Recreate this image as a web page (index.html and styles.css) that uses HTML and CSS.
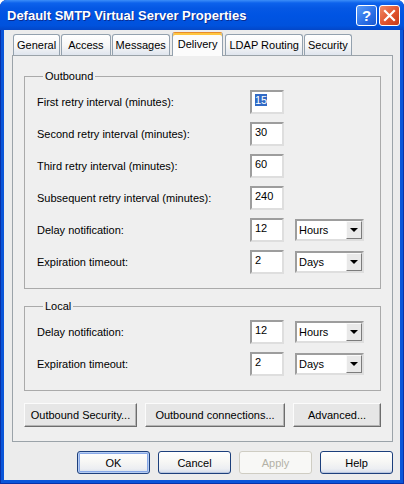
FILE: index.html
```html
<!DOCTYPE html>
<html lang="en">
<head>
  <meta charset="UTF-8" />
  <title>Default SMTP Virtual Server Properties</title>
  <link rel="stylesheet" href="styles.css">
</head>
<body>

  <div class="window">
    <div class="titlebar">
      <span class="title">Default SMTP Virtual Server Properties</span>
      <span class="cap-btn help">?</span>
      <span class="cap-btn close">
        <svg width="13" height="13" viewBox="0 0 13 13"><path d="M2 2 L11 11 M11 2 L2 11" stroke="#fff" stroke-width="2.2" stroke-linecap="square"/></svg>
      </span>
    </div>

    <div class="client">
      <div class="tabs">
        <span class="tab">General</span>
        <span class="tab tab-wide">Access</span>
        <span class="tab">Messages</span>
        <span class="tab active">Delivery</span>
        <span class="tab">LDAP Routing</span>
        <span class="tab">Security</span>
      </div>

      <div class="page">
        <!-- Outbound -->
        <fieldset class="group">
          <legend>Outbound</legend>
          <div class="rows">
            <div class="row">
              <label>First retry interval (minutes):</label>
              <div class="field"><span class="selected">15</span></div>
            </div>
            <div class="row">
              <label>Second retry interval (minutes):</label>
              <div class="field">30</div>
            </div>
            <div class="row">
              <label>Third retry interval (minutes):</label>
              <div class="field">60</div>
            </div>
            <div class="row">
              <label>Subsequent retry interval (minutes):</label>
              <div class="field">240</div>
            </div>
            <div class="row">
              <label>Delay notification:</label>
              <div class="field">12</div>
              <div class="combo"><span>Hours</span><span class="arrow"></span></div>
            </div>
            <div class="row">
              <label>Expiration timeout:</label>
              <div class="field">2</div>
              <div class="combo"><span>Days</span><span class="arrow"></span></div>
            </div>
          </div>
        </fieldset>

        <!-- Local -->
        <fieldset class="group local">
          <legend>Local</legend>
          <div class="rows">
            <div class="row">
              <label>Delay notification:</label>
              <div class="field">12</div>
              <div class="combo"><span>Hours</span><span class="arrow"></span></div>
            </div>
            <div class="row">
              <label>Expiration timeout:</label>
              <div class="field">2</div>
              <div class="combo"><span>Days</span><span class="arrow"></span></div>
            </div>
          </div>
        </fieldset>

        <div class="actions">
          <button class="btn btn-security">Outbound Security...</button>
          <button class="btn btn-conn">Outbound connections...</button>
          <button class="btn btn-adv">Advanced...</button>
        </div>
      </div>

      <div class="footer">
        <button class="xp-btn default">OK</button>
        <button class="xp-btn">Cancel</button>
        <button class="xp-btn" disabled>Apply</button>
        <button class="xp-btn">Help</button>
      </div>
    </div>
  </div>

</body>
</html>
```

FILE: styles.css
```css
* { box-sizing: border-box; }
body {
  margin: 0;
  font: 11px "Liberation Sans", Arial, sans-serif;
  color: #000;
  background: #fff;
}

.window {
  width: 404px;
  height: 484px;
  display: flex;
  flex-direction: column;
  background: #0a55d9;
  border-radius: 7px 7px 0 0;
  padding-bottom: 4px;
  box-shadow: inset 1px 0 0 #0831a8, inset -1px 0 0 #0831a8, inset 0 -1px 0 #0831a8;
}

/* Title bar */
.titlebar {
  height: 30px;
  display: flex;
  align-items: center;
  gap: 2px;
  padding: 0 4px 0 7px;
  border-radius: 7px 7px 0 0;
  background: linear-gradient(#3c8ef8 0, #0d62ec 3px, #0558e4 8px, #0054e3 50%, #0052dd 85%, #0347c8 100%);
}

.title {
  flex: 1;
  color: #fff;
  font: bold 13px "Liberation Sans", Arial, sans-serif;
  text-shadow: 1px 1px 0 #0b2c8f;
}

.cap-btn {
  width: 21px;
  height: 21px;
  border: 1px solid #fff;
  border-radius: 3px;
  display: flex;
  align-items: center;
  justify-content: center;
  color: #fff;
}

.help {
  background: linear-gradient(135deg, #5a9cf8, #2a6ee6 60%, #1a58d0);
  font: bold 15px "Liberation Sans", Arial, sans-serif;
}

.close {
  background: linear-gradient(135deg, #f08a66, #e0532e 55%, #c63a17);
}

/* Client area */
.client {
  flex: 1;
  margin: 0 4px;
  background: #ececec;
  padding: 2px 7px 0 8px;
}

.tabs {
  height: 23px;
  display: flex;
  align-items: flex-end;
  gap: 1px;
  padding-left: 1px;
  position: relative;
  z-index: 1;
}

.tab {
  height: 21px;
  padding: 0 3px;
  display: flex;
  align-items: center;
  border: 1px solid #93a1ae;
  border-bottom: none;
  border-radius: 3px 3px 0 0;
  background: linear-gradient(#ffffff, #f6f6f6 55%, #dfe5ee);
}

.tab-wide { padding: 0 6px; }

.tab.active {
  height: 24px;
  margin: 0 1px -1px;
  padding: 0 5px 2px;
  background: #fcfcfc;
  border-color: #93a1ae;
  border-top-color: #e68b2c;
  box-shadow: inset 0 2px 0 #ffc53e;
}

.page {
  background: #efefef;
  border: 1px solid #9ba3a9;
  padding: 14px 11px 14px;
}

/* Group boxes */
.group {
  margin: 0;
  min-width: 0;
  padding: 7px 16px 14px 12px;
  border: 1px solid #aaaaaa;
}

.group legend {
  margin-left: 6px;
  padding: 0 2px;
  line-height: 13px;
}

.group.local { margin-top: 11px; }

.rows {
  display: flex;
  flex-direction: column;
  gap: 8px;
}

.row {
  height: 24px;
  display: grid;
  grid-template-columns: 1fr 34px 69px;
  column-gap: 11px;
  align-items: center;
}

.field {
  height: 24px;
  padding: 1px 0 0 3px;
  line-height: 14px;
  background: #fff;
  border: 2px solid;
  border-color: #9d9d9d #dedede #dedede #9d9d9d;
}

.selected {
  background: #316ac5;
  color: #fff;
}

.combo {
  height: 22px;
  display: flex;
  align-items: center;
  padding-left: 2px;
  background: #fff;
  border: 2px solid;
  border-color: #9d9d9d #dedede #dedede #9d9d9d;
}

.combo span:first-child { flex: 1; }

.arrow {
  width: 16px;
  height: 18px;
  display: flex;
  align-items: center;
  justify-content: center;
  background: #e9e9e9;
  border: 1px solid;
  border-color: #fafafa #7c7c7c #7c7c7c #fafafa;
}

.arrow::after {
  content: "";
  border-left: 4px solid transparent;
  border-right: 4px solid transparent;
  border-top: 4px solid #000;
}

/* Buttons inside the page */
.actions {
  display: flex;
  gap: 8px;
  margin-top: 12px;
}

.btn {
  height: 24px;
  padding: 0;
  font: 11px "Liberation Sans", Arial, sans-serif;
  color: #000;
  background: #e6e6e6;
  border: 1px solid;
  border-color: #fbfbfb #6d6d6d #6d6d6d #fbfbfb;
  box-shadow: inset -1px -1px 0 #b4b4b4;
}

.btn-security { width: 113px; }
.btn-conn { width: 140px; }
.btn-adv { width: 88px; }

/* Dialog buttons */
.footer {
  display: flex;
  justify-content: flex-end;
  gap: 8px;
  margin-top: 9px;
}

.xp-btn {
  width: 73px;
  height: 23px;
  padding: 0;
  font: 11px "Liberation Sans", Arial, sans-serif;
  color: #000;
  border: 1px solid #1c3f7c;
  border-radius: 3px;
  background: linear-gradient(#ffffff, #f7f7f5 45%, #eceef2 80%, #d3dbea);
  box-shadow: inset 0 -1px 0 #b9c6de;
}

.xp-btn.default {
  box-shadow: inset 0 0 0 1px #b6cdf2, inset 0 0 0 2px #87a8e8;
}

.xp-btn:disabled {
  color: #b3b1a6;
  border-color: #cfcdc3;
  background: #f8f8f6;
  box-shadow: none;
}
```
